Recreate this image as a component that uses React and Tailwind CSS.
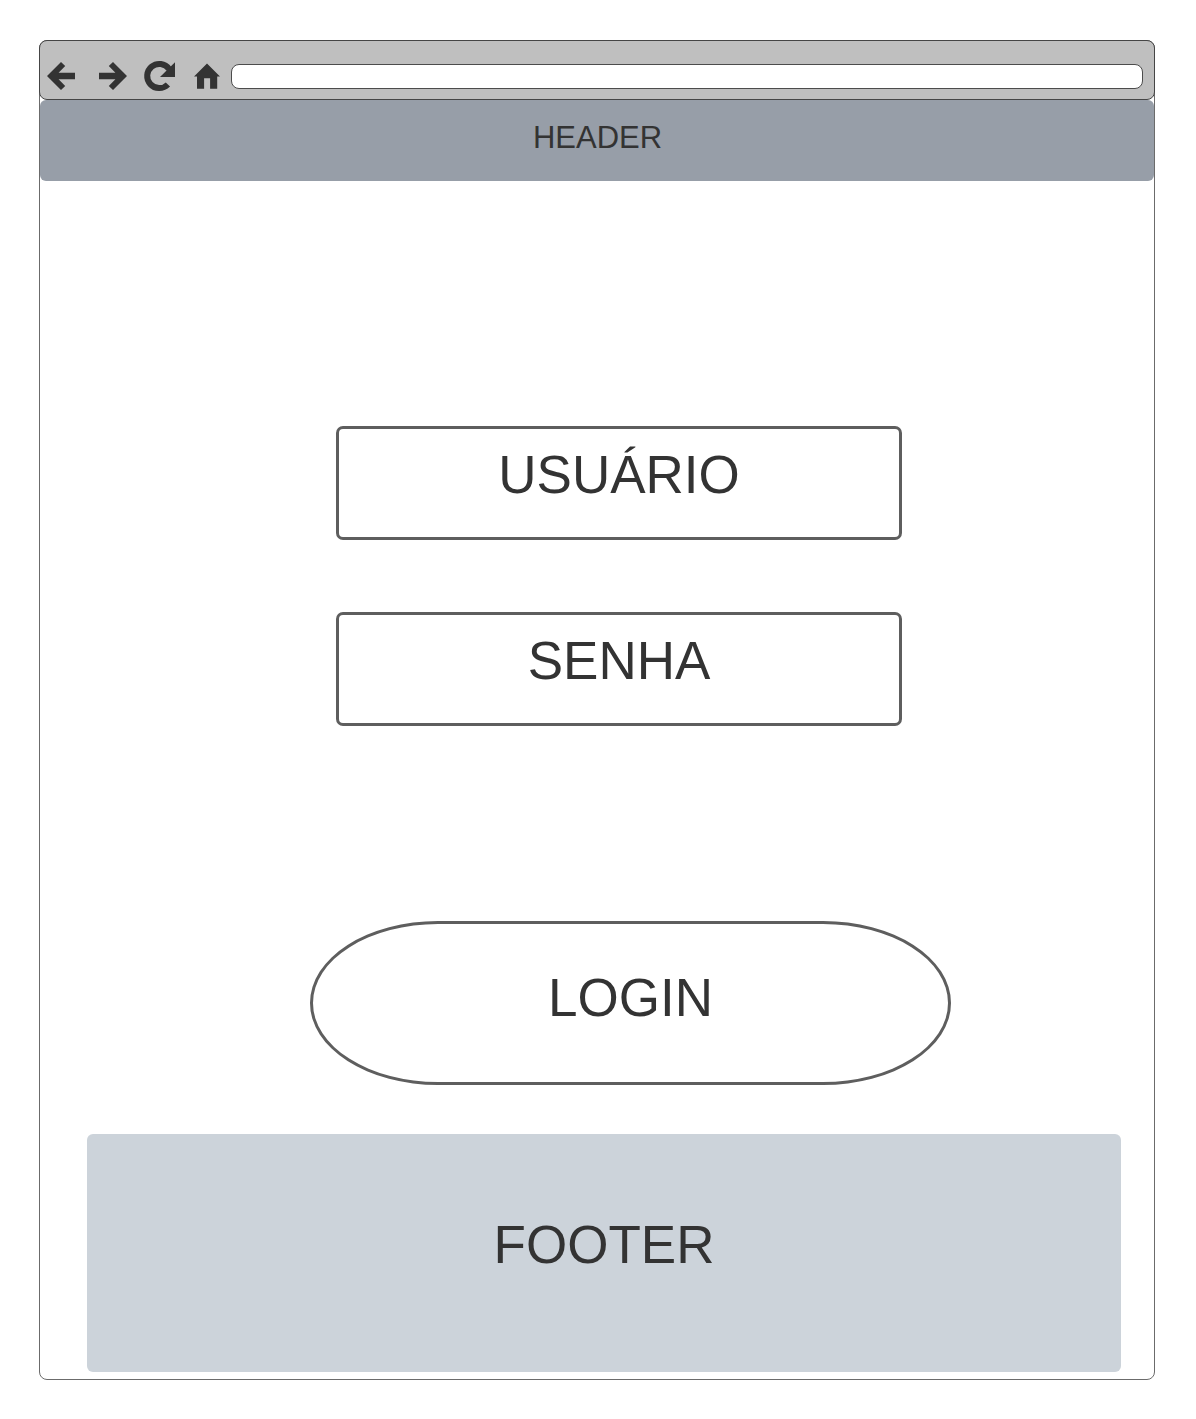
function Toolbar() {
  return (
    <div className="-mx-px -mt-px flex h-[60px] items-start rounded-[8px] border border-[#454545] bg-[#bfbfbf] text-[#333333]">
      <svg className="mt-[19px] ml-[6px] h-8 w-[30px] shrink-0" viewBox="0 0 30 32" fill="currentColor">
        <path d="M1 16 15 2l4.2 4-6.6 6.7H29v6.6H12.6l6.6 6.7-4.2 4z" />
      </svg>
      <svg className="mt-[19px] ml-[22px] h-8 w-[30px] shrink-0" viewBox="0 0 30 32" fill="currentColor">
        <path d="M29 16 15 2l-4.2 4 6.6 6.7H1v6.6h16.4l-6.6 6.7 4.2 4z" />
      </svg>
      <svg className="mt-[19px] ml-[15px] h-8 w-8 shrink-0" viewBox="0 0 32 32">
        <path d="M26.1 8.9A12.1 12.1 0 1 0 24.9 24.5" fill="none" stroke="currentColor" strokeWidth="6" />
        <path d="M32 2.2V16.9H17z" fill="currentColor" />
      </svg>
      <svg className="mt-[19px] ml-[18px] h-8 w-[28px] shrink-0" viewBox="0 0 28 32" fill="currentColor">
        <path d="M14 3.5 27 16.5H24.2V28.8H17.1V18.3H11.1V28.8H4V16.5H1z" />
      </svg>
      <div className="mt-[23px] mr-[11px] ml-[10px] h-[25px] flex-1 rounded-[8px] border border-[#4c4c4c] bg-white" />
    </div>
  );
}

function Field({ label }) {
  return (
    <div className="flex h-[114px] w-[566px] justify-center rounded-[7px] border-[3px] border-[#5e5e5e] pt-[15px] text-[53px] leading-[62px]">
      {label}
    </div>
  );
}

export default function App() {
  return (
    <div className="h-[1419px] w-[1196px] bg-white pt-[40px] pl-[39px] font-['Liberation_Sans',Arial,sans-serif] text-[#333333]">
      <div className="flex h-[1340px] w-[1116px] flex-col rounded-[8px] border border-[#6b6b6b] bg-white">
        <Toolbar />
        <header className="flex h-[81px] items-start justify-center rounded-[6px] bg-[#979ea8] pt-[20px] pl-px text-[31px] leading-[36px]">
          HEADER
        </header>
        <main className="flex flex-col">
          <div className="mt-[245px] ml-[296px] flex flex-col gap-[72px]">
            <Field label="USUÁRIO" />
            <Field label="SENHA" />
          </div>
          <button className="mt-[195px] ml-[270px] flex h-[164px] w-[641px] items-start justify-center rounded-[128px/82px] border-[3px] border-[#5e5e5e] pt-[43px] text-[53px] leading-[62px]">
            LOGIN
          </button>
        </main>
        <footer className="mt-[49px] ml-[47px] flex h-[238px] w-[1034px] items-start justify-center rounded-[6px] bg-[#ccd3da] pt-[80px] text-[53px] leading-[62px]">
          FOOTER
        </footer>
      </div>
    </div>
  );
}
